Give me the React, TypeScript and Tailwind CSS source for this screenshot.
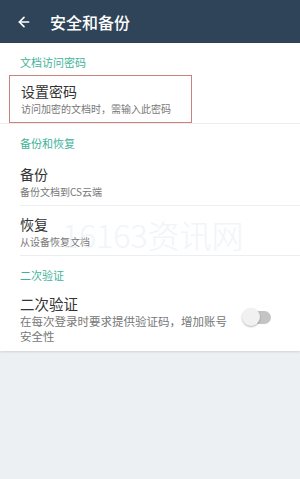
import { ArrowLeft } from 'lucide-react'

function Section({ title }: { title: string }) {
  return <div className="pl-[20px] pt-[12px] pb-[6px] text-[11px] leading-[14px] text-[#3fb39a]">{title}</div>
}

function Item({ title, sub }: { title: string; sub: string }) {
  return (
    <div className="ml-[20px] pt-[8px] pb-[6px] border-b border-[#eceef0]">
      <p className="text-[14px] leading-[20px] text-[#333]">{title}</p>
      <p className="text-[10px] leading-[15px] text-[#777]">{sub}</p>
    </div>
  )
}

export default function App() {
  return (
    <div
      className="relative w-[300px] h-[479px] bg-[#edf0f3] overflow-hidden"
      style={{ fontFamily: '"Noto Sans CJK SC", "Noto Sans", sans-serif' }}
    >
      {/* Toolbar */}
      <div className="h-[43px] bg-[#2f4458] flex items-center px-[16px] gap-[18px] text-white">
        <ArrowLeft size={16} strokeWidth={2.4} />
        <span className="text-[16px] font-medium">安全和备份</span>
      </div>

      <div className="bg-white shadow-[0_1px_2px_rgba(0,0,0,0.12)]">
        <Section title="文档访问密码" />
        <div className="border-b border-[#eceef0]">
          <div className="ml-[9px] w-[183px] h-[48px] border border-[#c7837c] pl-[11px] pt-[5px]">
            <p className="text-[14px] leading-[20px] text-[#333]">设置密码</p>
            <p className="text-[10px] leading-[15px] text-[#777]">访问加密的文档时，需输入此密码</p>
          </div>
        </div>

        <Section title="备份和恢复" />
        <Item title="备份" sub="备份文档到CS云端" />
        <Item title="恢复" sub="从设备恢复文档" />

        <Section title="二次验证" />
        <div className="ml-[20px] pt-[5px] pb-[7px] flex items-center">
          <div className="w-[212px]">
            <p className="text-[14.5px] leading-[21px] text-[#333]">二次验证</p>
            <p className="text-[11.5px] leading-[15px] text-[#777]">在每次登录时要求提供验证码，增加账号安全性</p>
          </div>
          <div className="relative ml-[13px] w-[26px] h-[13px] rounded-full bg-[#c4c4c4] -mt-[3px]">
            <div className="absolute -left-[3px] -top-[2.5px] w-[18px] h-[18px] rounded-full bg-[#f1f1f1] shadow-[0_1px_2px_rgba(0,0,0,0.28)]" />
          </div>
        </div>
      </div>

      {/* watermark */}
      <div className="absolute left-[62px] top-[214px] text-[32px] leading-[40px] font-light text-[#e8eef4] opacity-60 pointer-events-none">
        16163资讯网
      </div>
    </div>
  )
}
